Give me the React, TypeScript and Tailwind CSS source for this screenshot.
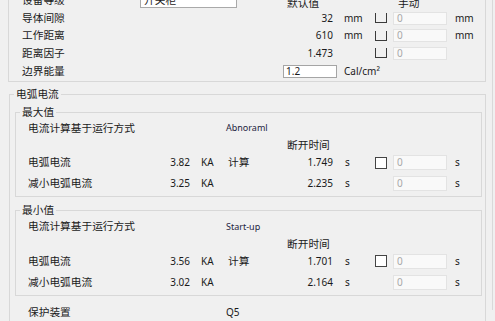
import React from "react";

const topGrid = "grid grid-cols-[118px_143px_54px_38px_18px_54px_1fr] items-center";
const arcGrid =
  "grid grid-cols-[122px_40px_36px_57px_50px_42px_18px_54px_1fr] items-center";

const cjk = "text-[10.7px]";
const num = "text-[10px]";

const OpenBox = () => (
  <span className="block h-[10px] w-[12px] border-x border-b border-[#3a3a3a]" />
);

const CheckBox = () => (
  <span className="block h-[12px] w-[12px] border border-[#444] bg-white" />
);

const ManualInput = ({ tall = false }: { tall?: boolean }) => (
  <div
    className={
      tall
        ? "flex h-[15px] w-[54px] items-center border border-[#e3e3e3] bg-[#f9f9f9] pl-[3px] text-[10px] text-[#a8a8a8]"
        : "flex h-[13px] w-[54px] items-center border border-[#e3e3e3] bg-[#f9f9f9] pl-[3px] text-[10px] text-[#a8a8a8]"
    }
  >
    0
  </div>
);

type TopRowProps = {
  label: string;
  value: string;
  unit?: string;
  manualUnit?: string;
  className: string;
};

const TopRow = ({ label, value, unit, manualUnit, className }: TopRowProps) => (
  <div className={`${topGrid} ${className}`}>
    <span className={cjk}>{label}</span>
    <span />
    <span className={`${num} pr-[4px] text-right`}>{value}</span>
    <span className={`${num} pl-[7px]`}>{unit}</span>
    <OpenBox />
    <ManualInput />
    <span className={`${num} pl-[8px]`}>{manualUnit}</span>
  </div>
);

type ArcRowProps = {
  label: string;
  current: string;
  time: string;
  calc?: boolean;
  className: string;
};

const ArcRow = ({ label, current, time, calc, className }: ArcRowProps) => (
  <div className={`${arcGrid} ${className}`}>
    <span className={cjk}>{label}</span>
    <span className={`${num} text-right`}>{current}</span>
    <span className={`${num} pl-[11px]`}>KA</span>
    <span className={`${cjk} pl-[2px]`}>{calc ? "计算" : ""}</span>
    <span className={`${num} text-right`}>{time}</span>
    <span className={`${num} pl-[12px]`}>s</span>
    {calc ? <CheckBox /> : <span />}
    <ManualInput tall />
    <span className={`${num} pl-[8px]`}>s</span>
  </div>
);

type ValueGroupProps = {
  title: string;
  mode: string;
  rows: { current: string; time: string; reduced: string; reducedTime: string };
  compact?: boolean;
};

const ValueGroup = ({ title, mode, rows, compact }: ValueGroupProps) => (
  <fieldset
    className={
      compact
        ? "ml-[5px] mt-[6px] w-[467px] border border-[#d8d8d8]"
        : "ml-[5px] mt-[4px] w-[467px] border border-[#d8d8d8]"
    }
  >
    <legend className={`${cjk} ml-[4px] px-[2px] leading-[14px]`}>{title}</legend>
    <div className={compact ? "pb-[3px] pl-[12px]" : "pb-[2px] pl-[12px]"}>
      <div className={`${arcGrid} ${compact ? "h-[19px]" : "h-[18px]"}`}>
        <span className={`${cjk} col-span-3`}>电流计算基于运行方式</span>
        <span className="col-span-3 text-[9px] text-[#1c2340]">{mode}</span>
      </div>
      <div className={`${arcGrid} ${compact ? "h-[14px]" : "h-[15px]"}`}>
        <span className={`${cjk} col-start-5 col-end-8 pl-[4px]`}>断开时间</span>
      </div>
      <ArcRow
        label="电弧电流"
        current={rows.current}
        time={rows.time}
        calc
        className={compact ? "h-[22px]" : "h-[21px]"}
      />
      <ArcRow
        label="减小电弧电流"
        current={rows.reduced}
        time={rows.reducedTime}
        className={compact ? "h-[20px]" : "h-[21px]"}
      />
    </div>
  </fieldset>
);

export default function App() {
  return (
    <div className="h-[321px] w-[495px] overflow-hidden bg-[#f0f0f0] font-['Noto_Sans','Noto_Sans_CJK_SC',sans-serif] text-[#1a1a1a]">
      <div className="h-full w-[493px] border-r border-[#d9d9d9]">
        {/* 设备参数 */}
        <div className="-mt-[11px] ml-[8px] w-[478px] border-x border-b border-[#d8d8d8] pb-[1px] pl-[13px]">
          <div className={`${topGrid} h-[16px]`}>
            <span className={cjk}>设备等级</span>
            <div className={`${cjk} flex h-[16px] w-[97px] items-center border border-[#a9a9a9] bg-white pl-[3px]`}>
              开关柜
            </div>
            <span className={`${cjk} col-span-2 pl-[4px] pt-[6px]`}>默认值</span>
            <span />
            <span className={`${cjk} col-span-2 pl-[5px] pt-[6px]`}>手动</span>
          </div>
          <TopRow label="导体间隙" value="32" unit="mm" manualUnit="mm" className="mt-[4px] h-[18px]" />
          <TopRow label="工作距离" value="610" unit="mm" manualUnit="mm" className="h-[17px]" />
          <TopRow label="距离因子" value="1.473" className="h-[18px]" />
          <div className={`${topGrid} h-[18px]`}>
            <span className={cjk}>边界能量</span>
            <span />
            <div className="flex h-[13px] w-[54px] items-center border border-[#a5a5a5] bg-white pl-[2px] text-[10px]">
              1.2
            </div>
            <span className={`${num} col-span-4 pl-[7px]`}>Cal/cm²</span>
          </div>
        </div>

        {/* 电弧电流 */}
        <fieldset className="ml-[9px] mt-[5px] w-[477px] border border-[#d8d8d8] pb-[10px]">
          <legend className={`${cjk} ml-[4px] px-[2px] leading-[14px]`}>电弧电流</legend>
          <ValueGroup
            title="最大值"
            mode="Abnoraml"
            rows={{ current: "3.82", time: "1.749", reduced: "3.25", reducedTime: "2.235" }}
          />
          <ValueGroup
            title="最小值"
            mode="Start-up"
            compact
            rows={{ current: "3.56", time: "1.701", reduced: "3.02", reducedTime: "2.164" }}
          />
          <div className="mt-[6px] grid h-[20px] grid-cols-[198px_1fr] items-center pl-[18px]">
            <span className={cjk}>保护装置</span>
            <span className={num}>Q5</span>
          </div>
        </fieldset>
      </div>
    </div>
  );
}
